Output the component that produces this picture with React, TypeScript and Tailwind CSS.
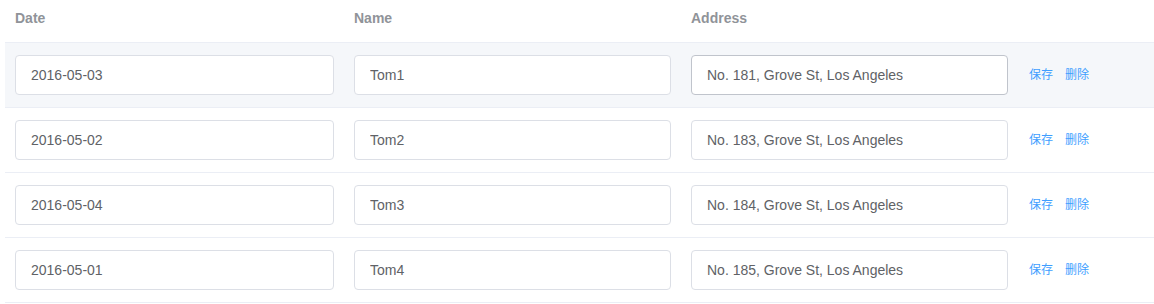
import { useState } from "react";

type Row = { date: string; name: string; address: string };

const ROWS: Row[] = [
  { date: "2016-05-03", name: "Tom1", address: "No. 181, Grove St, Los Angeles" },
  { date: "2016-05-02", name: "Tom2", address: "No. 183, Grove St, Los Angeles" },
  { date: "2016-05-04", name: "Tom3", address: "No. 184, Grove St, Los Angeles" },
  { date: "2016-05-01", name: "Tom4", address: "No. 185, Grove St, Los Angeles" },
];

const GRID = "grid grid-cols-[339px_337px_337px_136px]";

const Cell = ({ value, hovered }: { value: string; hovered?: boolean }) => (
  <div className="px-[10px] flex items-center">
    <input
      defaultValue={value}
      className={`w-full h-10 px-[15px] rounded-[4px] border bg-white text-[14px] text-[#606266] outline-none ${
        hovered ? "border-[#c0c4cc]" : "border-[#dcdfe6]"
      }`}
    />
  </div>
);

const App = () => {
  const [rows] = useState(ROWS);

  return (
    <div
      className="w-[1154px] h-[304px] bg-white pl-[5px]"
      style={{ fontFamily: '"Liberation Sans", Arial, "Noto Sans CJK SC", sans-serif' }}
    >
      <div className={`${GRID} h-[43px] border-b border-[#ebeef5] text-[14px] font-bold text-[#909399]`}>
        <div className="px-[10px] pb-[5px] flex items-center">Date</div>
        <div className="px-[10px] pb-[5px] flex items-center">Name</div>
        <div className="px-[10px] pb-[5px] flex items-center">Address</div>
        <div />
      </div>

      {rows.map((row, i) => (
        <div
          key={row.name}
          className={`${GRID} h-[65px] border-b border-[#ebeef5] ${i === 0 ? "bg-[#f5f7fa]" : "bg-white"}`}
        >
          <Cell value={row.date} />
          <Cell value={row.name} />
          <Cell value={row.address} hovered={i === 0} />
          <div className="pl-[11px] flex items-center gap-3 text-[12px] text-[#409eff]">
            <button className="cursor-pointer">保存</button>
            <button className="cursor-pointer">删除</button>
          </div>
        </div>
      ))}
    </div>
  );
};

export default App;
